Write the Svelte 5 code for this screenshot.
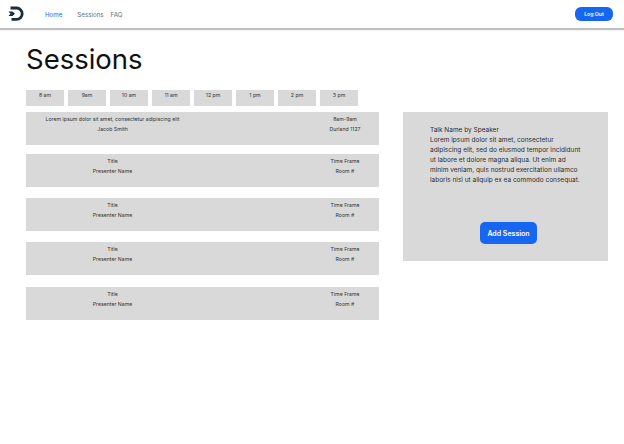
<script>
  const hours = ['8 am', '9am', '10 am', '11 am', '12 pm', '1 pm', '2 pm', '3 pm'];

  const sessions = [
    { title: 'Lorem ipsum dolor sit amet, consectetur adipiscing elit', presenter: 'Jacob Smith', time: '8am-9am', room: 'Durland 1127', gap: 9 },
    { title: 'Title', presenter: 'Presenter Name', time: 'Time Frame', room: 'Room #', gap: 11 },
    { title: 'Title', presenter: 'Presenter Name', time: 'Time Frame', room: 'Room #', gap: 11 },
    { title: 'Title', presenter: 'Presenter Name', time: 'Time Frame', room: 'Room #', gap: 12 },
    { title: 'Title', presenter: 'Presenter Name', time: 'Time Frame', room: 'Room #', gap: 0 }
  ];
</script>

<nav class="navbar">
  <svg class="logo" width="16" height="16" viewBox="0 0 16 16" aria-hidden="true">
    <path d="M2.500 2H8.500a5.700 5.700 0 0 1 0 11.400H3.500" fill="none" stroke="#1c2b3f" stroke-width="2.800" />
    <path d="M0.500 5.500 4.500 5.500 7 7.700 4.500 9.900 0.500 9.900 2.500 7.700z" fill="#1c2b3f" />
  </svg>
  <a class="link active" href="#home">Home</a>
  <a class="link sessions" href="#sessions">Sessions</a>
  <a class="link faq" href="#faq">FAQ</a>
  <button class="logout">Log Out</button>
</nav>

<main class="page">
  <h1>Sessions</h1>

  <div class="content">
    <section class="schedule">
      <div class="hours">
        {#each hours as hour}
          <div class="hour">{hour}</div>
        {/each}
      </div>

      {#each sessions as s}
        <div class="session" style="margin-bottom: {s.gap}px">
          <div class="who">
            <span>{s.title}</span>
            <span>{s.presenter}</span>
          </div>
          <div class="when">
            <span>{s.time}</span>
            <span>{s.room}</span>
          </div>
        </div>
      {/each}
    </section>

    <aside class="details">
      <p>
        Talk Name by Speaker<br />
        Lorem ipsum dolor sit amet, consectetur adipiscing elit, sed do eiusmod tempor incididunt ut labore et dolore magna aliqua. Ut enim ad minim veniam, quis nostrud exercitation ullamco laboris nisi ut aliquip ex ea commodo consequat.
      </p>
      <button class="add">Add Session</button>
    </aside>
  </div>
</main>

<style>
  :global(body) {
    background: #fff;
    font-family: Inter, "Liberation Sans", sans-serif;
  }

  .navbar {
    display: flex;
    align-items: center;
    height: 28px;
    padding: 0 11px 0 8px;
    background: #fff;
    box-shadow: 0 2px 1px 0 rgba(0, 0, 0, 0.25);
  }

  .logo {
    margin-right: 21px;
  }

  .link {
    font-size: 6.200px;
    color: #666d78;
    text-decoration: none;
  }

  .link.active {
    color: #1a66f0;
    margin-right: 15px;
  }

  .link.sessions {
    margin-right: 7px;
  }

  .logout {
    margin-left: auto;
    width: 38px;
    height: 14px;
    padding: 0;
    border: none;
    border-radius: 6px;
    background: #1766f2;
    color: #fff;
    font: 600 5.200px Inter, sans-serif;
  }

  .page {
    padding: 0 0 0 26px;
  }

  h1 {
    margin: 0;
    padding-top: 13px;
    height: 49px;
    font-size: 27.500px;
    line-height: 36px;
    font-weight: 400;
    color: #111;
    box-sizing: content-box;
  }

  .content {
    display: flex;
    align-items: flex-start;
  }

  .schedule {
    width: 353px;
    margin-right: 24px;
  }

  .hours {
    display: flex;
    gap: 4px;
    margin-bottom: 6px;
  }

  .hour {
    width: 38px;
    height: 16px;
    background: #d9d9d9;
    text-align: center;
    font-size: 5.200px;
    line-height: 8px;
    padding-top: 1px;
    box-sizing: border-box;
    color: #333;
  }

  .session {
    display: flex;
    height: 33px;
    background: #d9d9d9;
    font-size: 5.200px;
    color: #333;
  }

  .who,
  .when {
    display: flex;
    flex-direction: column;
    align-items: center;
    gap: 3px;
    padding-top: 4px;
    line-height: 7px;
  }

  .who {
    width: 173px;
  }

  .when {
    margin-left: auto;
    width: 68px;
  }

  .details {
    width: 205px;
    height: 149px;
    margin-top: 22px;
    background: #d9d9d9;
    padding: 13px 21px 0 27px;
    box-sizing: border-box;
    display: flex;
    flex-direction: column;
    align-items: center;
  }

  .details p {
    margin: 0;
    max-width: 152px;
    align-self: flex-start;
    font-size: 6.500px;
    line-height: 10px;
    color: #2b2b2b;
    opacity: 0.99;
  }

  .add {
    margin-top: 37px;
    width: 57px;
    height: 22px;
    padding: 0;
    border: none;
    border-radius: 5px;
    background: #1766f2;
    color: #fff;
    font: 600 7px Inter, sans-serif;
  }
</style>
